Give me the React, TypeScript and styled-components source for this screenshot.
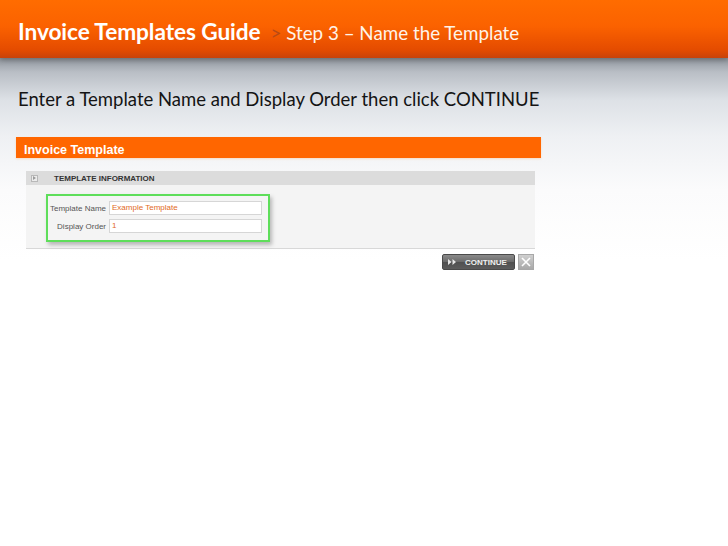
import React from 'react';
import styled, { createGlobalStyle } from 'styled-components';

const GlobalStyle = createGlobalStyle`
  html, body {
    margin: 0;
    padding: 0;
  }
  body {
    width: 728px;
    height: 546px;
    overflow: hidden;
    background: linear-gradient(to bottom, #8f959d 58px, #b9bec5 72px, #dde1e6 100px, #eef0f3 135px, #fbfbfc 190px, #ffffff 260px, #ffffff 100%);
    font-family: Lato, "Open Sans", sans-serif;
  }
`;

function App() {
  return (
    <>
      <GlobalStyle />
      <Page>
        <Header>
          <Title>Invoice Templates Guide</Title>
          <Step><Chevron>&gt;</Chevron> Step 3 – Name the Template</Step>
        </Header>
        <Instruction>Enter a Template Name and Display Order then click CONTINUE</Instruction>
        <Shot>
          <FormBar>Invoice Template</FormBar>
          <Panel>
            <SectionHead>
              <Toggle>
                <svg width="3" height="4" viewBox="0 0 3 4">
                  <path d="M0 0 L3 2 L0 4 Z" fill="#9a9a9a" />
                </svg>
              </Toggle>
              <SectionTitle>TEMPLATE INFORMATION</SectionTitle>
            </SectionHead>
            <SectionBody>
              <Highlight>
                <FieldRow>
                  <Label>Template Name</Label>
                  <Field>Example Template</Field>
                </FieldRow>
                <FieldRow>
                  <Label>Display Order</Label>
                  <Field>1</Field>
                </FieldRow>
              </Highlight>
            </SectionBody>
          </Panel>
          <Actions>
            <ContinueButton>
              <svg width="9" height="6" viewBox="0 0 9 6">
                <path d="M0 0 L3.5 3 L0 6 Z M4.5 0 L8 3 L4.5 6 Z" fill="#e8e8e8" />
              </svg>
              <span>CONTINUE</span>
            </ContinueButton>
            <CloseButton>
              <svg width="10" height="10" viewBox="0 0 10 10">
                <path d="M1 1 L9 9 M9 1 L1 9" stroke="#ffffff" strokeWidth="1.6" />
              </svg>
            </CloseButton>
          </Actions>
        </Shot>
      </Page>
    </>
  );
}

const Page = styled.div`
  display: flex;
  flex-direction: column;
`;

const Header = styled.div`
  height: 58px;
  box-sizing: border-box;
  padding: 4px 0 0 18px;
  display: flex;
  align-items: center;
  gap: 10px;
  background: linear-gradient(to bottom, #ff6c00 0%, #fb6200 45%, #e54c00 85%, #c8420a 100%);
  box-shadow: 0 2px 5px rgba(60, 60, 60, 0.45);
`;

const Title = styled.h1`
  margin: 0;
  color: #ffffff;
  font-size: 22.7px;
  font-weight: bold;
  letter-spacing: -0.1px;
`;

const Step = styled.span`
  color: #fff3e8;
  font-size: 18.8px;
  margin-top: 2px;
`;

const Chevron = styled.span`
  color: #b84a14;
`;

const Instruction = styled.p`
  margin: 30px 0 0 18px;
  color: #141414;
  font-size: 18.5px;
  line-height: 23px;
`;

const Shot = styled.div`
  margin: 26px 0 0 16px;
  width: 525px;
  display: flex;
  flex-direction: column;
  font-family: "Liberation Sans", Arial, sans-serif;
`;

const FormBar = styled.div`
  height: 21px;
  box-sizing: border-box;
  background: #ff6600;
  color: #ffffff;
  font-weight: bold;
  font-size: 12.5px;
  line-height: 14px;
  padding: 6px 0 0 8px;
  box-shadow: 0 1px 2px rgba(255, 160, 80, 0.3);
`;

const Panel = styled.div`
  margin: 13px 6px 0 10px;
  display: flex;
  flex-direction: column;
  border-bottom: 1px solid #d8d8d8;
`;

const SectionHead = styled.div`
  height: 14px;
  background: #dcdcdc;
  display: flex;
  align-items: center;
  padding-left: 5px;
`;

const Toggle = styled.span`
  width: 5px;
  height: 5px;
  border: 1px solid #b8b8b8;
  background: #ececec;
  margin-right: 16px;
  display: flex;
  align-items: center;
  justify-content: center;
`;

const SectionTitle = styled.span`
  font-size: 8px;
  font-weight: bold;
  color: #333333;
`;

const SectionBody = styled.div`
  background: #f4f4f4;
  height: 63px;
  padding: 9px 0 0 20px;
  box-sizing: border-box;
`;

const Highlight = styled.div`
  width: 224px;
  height: 48px;
  box-sizing: border-box;
  border: 2px solid #5ede5a;
  box-shadow: 2px 3px 4px rgba(0, 0, 0, 0.25);
  padding: 5px 6px 0 0;
  display: flex;
  flex-direction: column;
  gap: 4px;
`;

const FieldRow = styled.div`
  display: flex;
  align-items: center;
  gap: 3px;
`;

const Label = styled.span`
  width: 58px;
  text-align: right;
  font-size: 8px;
  color: #555555;
`;

const Field = styled.span`
  flex: 1;
  height: 14px;
  box-sizing: border-box;
  background: #ffffff;
  border: 1px solid #d6d6d6;
  color: #e26a1e;
  font-size: 8px;
  line-height: 12px;
  padding-left: 2px;
`;

const Actions = styled.div`
  display: flex;
  justify-content: flex-end;
  gap: 3px;
  margin: 5px 7px 0 0;
`;

const ContinueButton = styled.div`
  width: 73px;
  height: 16px;
  box-sizing: border-box;
  border-radius: 2px;
  background: linear-gradient(to bottom, #8a8a8a 0%, #6a6a6a 50%, #505050 51%, #5c5c5c 100%);
  border: 1px solid #4a4a4a;
  display: flex;
  align-items: center;
  padding-left: 5px;
  gap: 8px;
  color: #f0f0f0;
  font-size: 8px;
  font-weight: bold;
`;

const CloseButton = styled.div`
  width: 16px;
  height: 16px;
  box-sizing: border-box;
  border: 1px solid #a8a8a8;
  background: linear-gradient(to bottom, #cfcfcf, #a9a9a9);
  display: flex;
  align-items: center;
  justify-content: center;
`;

export default App;
